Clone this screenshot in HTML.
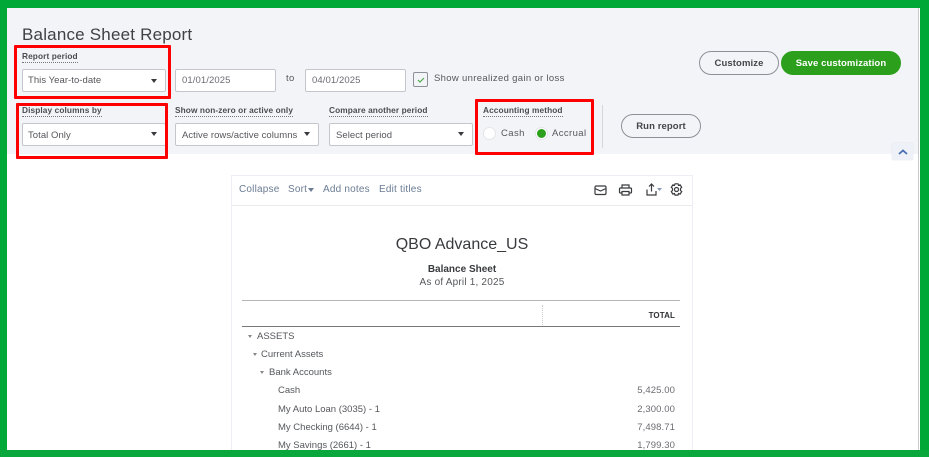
<!DOCTYPE html>
<html><head><meta charset="utf-8"><style>
html,body{margin:0;padding:0;background:#fff}
#p{position:relative;width:929px;height:457px;overflow:hidden;background:#fff;font-family:"Liberation Sans",sans-serif;color:#393a3d;font-size:10px}
#p div,#p span.a{position:absolute;white-space:nowrap;box-sizing:border-box}
.lb{font-weight:bold;font-size:8.3px;color:#4a4c50;border-bottom:1px dotted #777;line-height:11px;height:12px;letter-spacing:.1px}
.in{background:#fff;border:1px solid #c4c6cc;border-radius:2px;height:23px;line-height:22px;padding-left:6px;font-size:9.5px;color:#55575b;letter-spacing:.05px}
.ar{width:0;height:0;border-left:3px solid transparent;border-right:3px solid transparent;border-top:4px solid #393a3d}
.r{border:3px solid #f00;background:transparent;border-radius:1px}
.btn{border:1px solid #8d9096;border-radius:13px;text-align:center;font-weight:bold;font-size:9.5px;color:#44464a;letter-spacing:.1px;background:#f3f4f8}
.t{font-size:9.5px;color:#55575b;letter-spacing:0;line-height:12px}
.l{font-size:10px;color:#6b7c93;letter-spacing:.2px;line-height:12px}
.n{font-size:9.5px;color:#6b6c72;letter-spacing:.1px;line-height:12px;right:254px}
.c{width:0;height:0;border-left:2.5px solid transparent;border-right:2.5px solid transparent;border-top:3px solid #888}
</style></head><body><div id="p">
<div style="left:7px;top:8px;width:912px;height:146px;background:#f3f4f8"></div>
<div style="left:918px;top:8px;width:1px;height:442px;background:#c9cacd"></div>

<div style="left:22px;top:24px;font-size:17px;line-height:21px;color:#3f4145;letter-spacing:.2px">Balance Sheet Report</div>

<div class="lb" style="left:22px;top:51px">Report period</div>
<div class="in" style="left:22px;top:69px;width:144px;padding-left:5px">This Year-to-date<div class="ar" style="left:128px;top:9px"></div></div>
<div class="in" style="left:175px;top:69px;width:101px;color:#6b6c72;letter-spacing:.1px">01/01/2025</div>
<div class="t" style="left:286px;top:73px;letter-spacing:.3px">to</div>
<div class="in" style="left:305px;top:69px;width:101px;color:#6b6c72;letter-spacing:.1px">04/01/2025</div>
<div style="left:413px;top:72px;width:15px;height:15px;border:1px solid #8d9096;border-radius:2px;background:#f3f4f8"><svg width="13" height="13" style="position:absolute;left:0;top:0"><path d="M4 7l2 2 4-4" fill="none" stroke="#4ea84e" stroke-width="1.2"/></svg></div>
<div class="t" style="left:434px;top:73px;letter-spacing:.33px">Show unrealized gain or loss</div>

<div class="lb" style="left:22px;top:105px">Display columns by</div>
<div class="in" style="left:22px;top:123px;width:144px;padding-left:5px;line-height:23px">Total Only<div class="ar" style="left:128px;top:8px"></div></div>
<div class="lb" style="left:175px;top:105px">Show non-zero or active only</div>
<div class="in" style="left:175px;top:123px;width:144px;line-height:23px">Active rows/active columns<div class="ar" style="left:128px;top:8px"></div></div>
<div class="lb" style="left:329px;top:105px">Compare another period</div>
<div class="in" style="left:329px;top:123px;width:144px;line-height:23px">Select period<div class="ar" style="left:128px;top:8px"></div></div>

<div class="lb" style="left:483px;top:105px">Accounting method</div>
<div style="left:483px;top:127px;width:13px;height:13px;border-radius:50%;background:#fff;border:1px solid #e4e5e8"></div>
<div class="t" style="left:501px;top:128px;letter-spacing:.4px">Cash</div>
<div style="left:535px;top:127px;width:13px;height:13px;border-radius:50%;background:#fff;border:1px solid #e4e5e8"></div>
<div style="left:537px;top:129px;width:9px;height:9px;border-radius:50%;background:#2ca01c"></div>
<div class="t" style="left:552px;top:128px;letter-spacing:.4px">Accrual</div>
<div style="left:602px;top:105px;width:1px;height:43px;background:#d4d7dc"></div>

<div class="btn" style="left:621px;top:114px;width:80px;height:24px;line-height:23px">Run report</div>
<div class="btn" style="left:699px;top:51px;width:80px;height:24px;line-height:23px">Customize</div>
<div class="btn" style="left:781px;top:51px;width:120px;height:24px;line-height:23px;background:#2ca01c;border-color:#2ca01c;color:#fff">Save customization</div>
<div style="left:892px;top:143px;width:21px;height:17px;background:#eef1f7;border-radius:2px;box-shadow:0 0 1px #ccd"><svg width="21" height="17" style="position:absolute;left:0;top:0"><path d="M7 11l4-3.5 4 3.5" fill="none" stroke="#4a6fb5" stroke-width="1.8"/></svg></div>

<div class="r" style="left:14px;top:45px;width:157px;height:54px"></div>
<div class="r" style="left:16px;top:103px;width:152px;height:56px"></div>
<div class="r" style="left:475px;top:99px;width:119px;height:56px"></div>

<!-- report -->
<div style="left:231px;top:175px;width:462px;height:282px;background:#fff;border:1px solid #eceef3"></div>
<div style="left:232px;top:205px;width:460px;height:1px;background:#e9ebef"></div>
<div class="l" style="left:239px;top:184px">Collapse</div>
<div class="l" style="left:288px;top:184px">Sort</div>
<div style="left:308px;top:188px;width:0;height:0;border-left:3.5px solid transparent;border-right:3.5px solid transparent;border-top:4px solid #6b7c93"></div>
<div class="l" style="left:323px;top:184px">Add notes</div>
<div class="l" style="left:379px;top:184px">Edit titles</div>

<svg width="100" height="20" style="position:absolute;left:590px;top:180px" fill="none" stroke="#393a3d" stroke-width="1.2">
<rect x="5" y="6" width="11" height="8.5" rx="1.2"/><path d="M5 8.5l5.5 2.5 5.5-2.5"/>
<path d="M32 8V5h7v3M32 13h-1.5a1 1 0 0 1-1-1V9a1 1 0 0 1 1-1h10a1 1 0 0 1 1 1v3a1 1 0 0 1-1 1H39M32 11.5h7v3.5h-7z"/>
<path d="M57 9.5v5.5h9v-4M61.5 11.5V4.5M59 6.5l2.5-2.5 2.5 2.5"/>
<path d="M67 8h5l-2.5 3z" fill="#8a9bb5" stroke="none"/>
<circle cx="86.5" cy="9.5" r="2"/><path d="M85 3.8h3l.5 1.6 1.6-.6 1.6 2.5-1.2 1.2v1.9l1.2 1.2-1.6 2.5-1.6-.6-.5 1.6h-3l-.5-1.6-1.6.6-1.6-2.5 1.2-1.2V8.5L81.3 7.3l1.6-2.5 1.6.6z"/>
</svg>

<div style="left:232px;top:235px;width:460px;text-align:center;font-size:16px;line-height:19px;color:#393a3d;letter-spacing:0">QBO Advance_US</div>
<div style="left:232px;top:264px;width:460px;text-align:center;font-size:10px;font-weight:bold;line-height:12px;color:#393a3d">Balance Sheet</div>
<div style="left:232px;top:277px;width:460px;text-align:center;font-size:10px;line-height:12px;color:#55575b;letter-spacing:.2px">As of April 1, 2025</div>

<div style="left:242px;top:300px;width:438px;height:1px;background:#b5b6b8"></div>
<div style="left:242px;top:326px;width:438px;height:1px;background:#77787b"></div>
<div style="left:542px;top:305px;width:0;height:20px;border-left:1px dotted #ccc"></div>
<div style="right:254px;top:310px;font-size:8px;font-weight:bold;line-height:11px;color:#2f3033;letter-spacing:.1px">TOTAL</div>

<div class="c" style="left:248px;top:335px"></div><div class="t" style="left:257px;top:331px">ASSETS</div>
<div class="c" style="left:253px;top:353px"></div><div class="t" style="left:261px;top:349px">Current Assets</div>
<div class="c" style="left:260px;top:371px"></div><div class="t" style="left:269px;top:367px">Bank Accounts</div>
<div class="t" style="left:278px;top:385px">Cash</div><div class="n" style="top:385px">5,425.00</div>
<div class="t" style="left:278px;top:404px">My Auto Loan (3035) - 1</div><div class="n" style="top:404px">2,300.00</div>
<div class="t" style="left:278px;top:422px">My Checking (6644) - 1</div><div class="n" style="top:422px">7,498.71</div>
<div class="t" style="left:278px;top:440px">My Savings (2661) - 1</div><div class="n" style="top:440px">1,799.30</div>

<div style="left:0;top:0;width:929px;height:8px;background:#00a838"></div>
<div style="left:0;top:0;width:7px;height:457px;background:#00a838"></div>
<div style="left:920px;top:0;width:9px;height:457px;background:#00a838"></div>
<div style="left:0;top:450px;width:929px;height:7px;background:#0aa83c"></div>
</div></body></html>
